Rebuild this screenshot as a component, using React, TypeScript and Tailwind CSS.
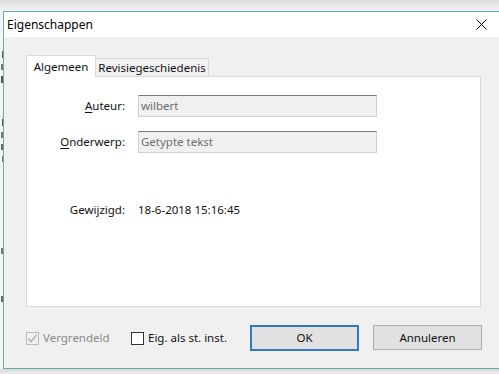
const font = { fontFamily: '"Noto Sans", "Segoe UI", sans-serif' };

const Checkbox = (props: { checked?: boolean; disabled?: boolean; label: string; className?: string }) => {
  const box = props.disabled ? "border-[#bcbcbc] bg-[#f0f0f0]" : "border-[#333333] bg-white";
  const text = props.disabled ? "text-[#8a8a8a]" : "text-[#111111]";
  return (
    <div className={"flex items-center gap-[4px] shrink-0 whitespace-nowrap " + (props.className || "")}>
      <div className={"w-[13px] h-[13px] shrink-0 border flex items-center justify-center " + box}>
        {props.checked && (
          <svg width="11" height="11" viewBox="0 0 11 11">
            <polyline points="1.5,5.5 4.2,8.5 9.5,1.8" fill="none" stroke="#a6a6a6" strokeWidth="1.2" />
          </svg>
        )}
      </div>
      <span className={"text-[11.5px] leading-[14px] " + text}>{props.label}</span>
    </div>
  );
};

const Field = (props: { label: string; hot: string; value: string }) => {
  const rest = props.label.slice(1);
  return (
    <div className="flex items-center">
      <div className="w-[98px] text-right text-[11.5px] text-[#111111]">
        <span className="underline underline-offset-2">{props.hot}</span>
        {rest}
      </div>
      <div className="ml-[13px] w-[239px] h-[22px] bg-[#f0f0f0] border border-[#cfcfcf] border-t-[#7a7a7a] flex items-center px-[2px] text-[11.5px] text-[#6d6d6d]">
        {props.value}
      </div>
    </div>
  );
};

function App() {
  return (
    <div className="w-[499px] h-[374px] overflow-hidden flex flex-col bg-[#e9e9e9]" style={font}>
      <div className="h-[11px] bg-gradient-to-b from-[#dcdcdc] to-[#f3f3f3] shrink-0"></div>
      <div className="flex flex-1 min-h-0">
        {/* sliver of the window behind the dialog */}
        <div className="w-[3px] shrink-0 bg-[#f4f4f4] flex flex-col items-end pt-[40px] gap-[6px]">
          <div className="w-[1px] h-[7px] bg-[#555]"></div>
          <div className="w-[2px] h-[6px] bg-[#777]"></div>
          <div className="w-[2px] h-[7px] bg-[#555]"></div>
          <div className="mt-[30px] w-[1px] h-[7px] bg-[#555]"></div>
          <div className="w-[2px] h-[6px] bg-[#777]"></div>
          <div className="w-[2px] h-[6px] bg-[#666]"></div>
          <div className="w-[1px] h-[6px] bg-[#777]"></div>
          <div className="mt-[80px] w-[2px] h-[6px] bg-[#777]"></div>
          <div className="mt-[36px] w-[2px] h-[6px] bg-[#666]"></div>
        </div>
        <div className="w-[520px] shrink-0 h-[358px] border border-r-0 border-[#5fb0b5] flex flex-col">
          <div className="h-[25px] bg-white flex items-center justify-between pl-[3px] shrink-0">
            <span className="text-[12px] text-black">Eigenschappen</span>
            <svg width="11" height="11" viewBox="0 0 11 11" className="mr-[36px]">
              <path d="M0.5 0.5 L10.5 10.5 M10.5 0.5 L0.5 10.5" stroke="#000" strokeWidth="1" />
            </svg>
          </div>
          <div className="flex-1 bg-[#f0f0f0] pl-[22px] pt-[18px]">
            <div className="w-[455px]">
              <div className="flex items-end h-[22px] relative z-10">
                <div className="h-[22px] w-[70px] bg-white border border-b-0 border-[#d9d9d9] flex items-center justify-center text-[11.5px] text-[#111]">
                  Algemeen
                </div>
                <div className="h-[19px] w-[113px] bg-[#f0f0f0] border border-l-0 border-[#d9d9d9] flex items-center justify-center text-[11.5px] text-[#111]">
                  Revisiegeschiedenis
                </div>
              </div>
              <div className="-mt-[1px] h-[231px] bg-white border border-[#d9d9d9] pt-[18px] flex flex-col">
                <Field label="Auteur:" hot="A" value="wilbert" />
                <div className="mt-[14px]">
                  <Field label="Onderwerp:" hot="O" value="Getypte tekst" />
                </div>
                <div className="mt-[49px] flex items-center h-[16px] text-[11.5px] text-[#111]">
                  <div className="w-[98px] text-right">Gewijzigd:</div>
                  <div className="ml-[13px]">18-6-2018 15:16:45</div>
                </div>
              </div>
              <div className="mt-[18px] flex items-center h-[26px]">
                <Checkbox checked disabled label="Vergrendeld" className="w-[105px]" />
                <Checkbox label="Eig. als st. inst." className="w-[119px]" />
                <button className="shrink-0 w-[109px] h-[26px] bg-[#e1e1e1] border-2 border-[#2f78c4] text-[11.5px] text-[#111]">
                  OK
                </button>
                <button className="shrink-0 ml-[14px] w-[109px] h-[25px] self-start bg-[#e1e1e1] border border-[#adadad] text-[11.5px] text-[#111]">
                  Annuleren
                </button>
              </div>
            </div>
          </div>
        </div>
      </div>
      <div className="h-[5px] shrink-0 bg-gradient-to-b from-[#d8d8d8] to-[#eeeeee]"></div>
    </div>
  );
}

export default App
